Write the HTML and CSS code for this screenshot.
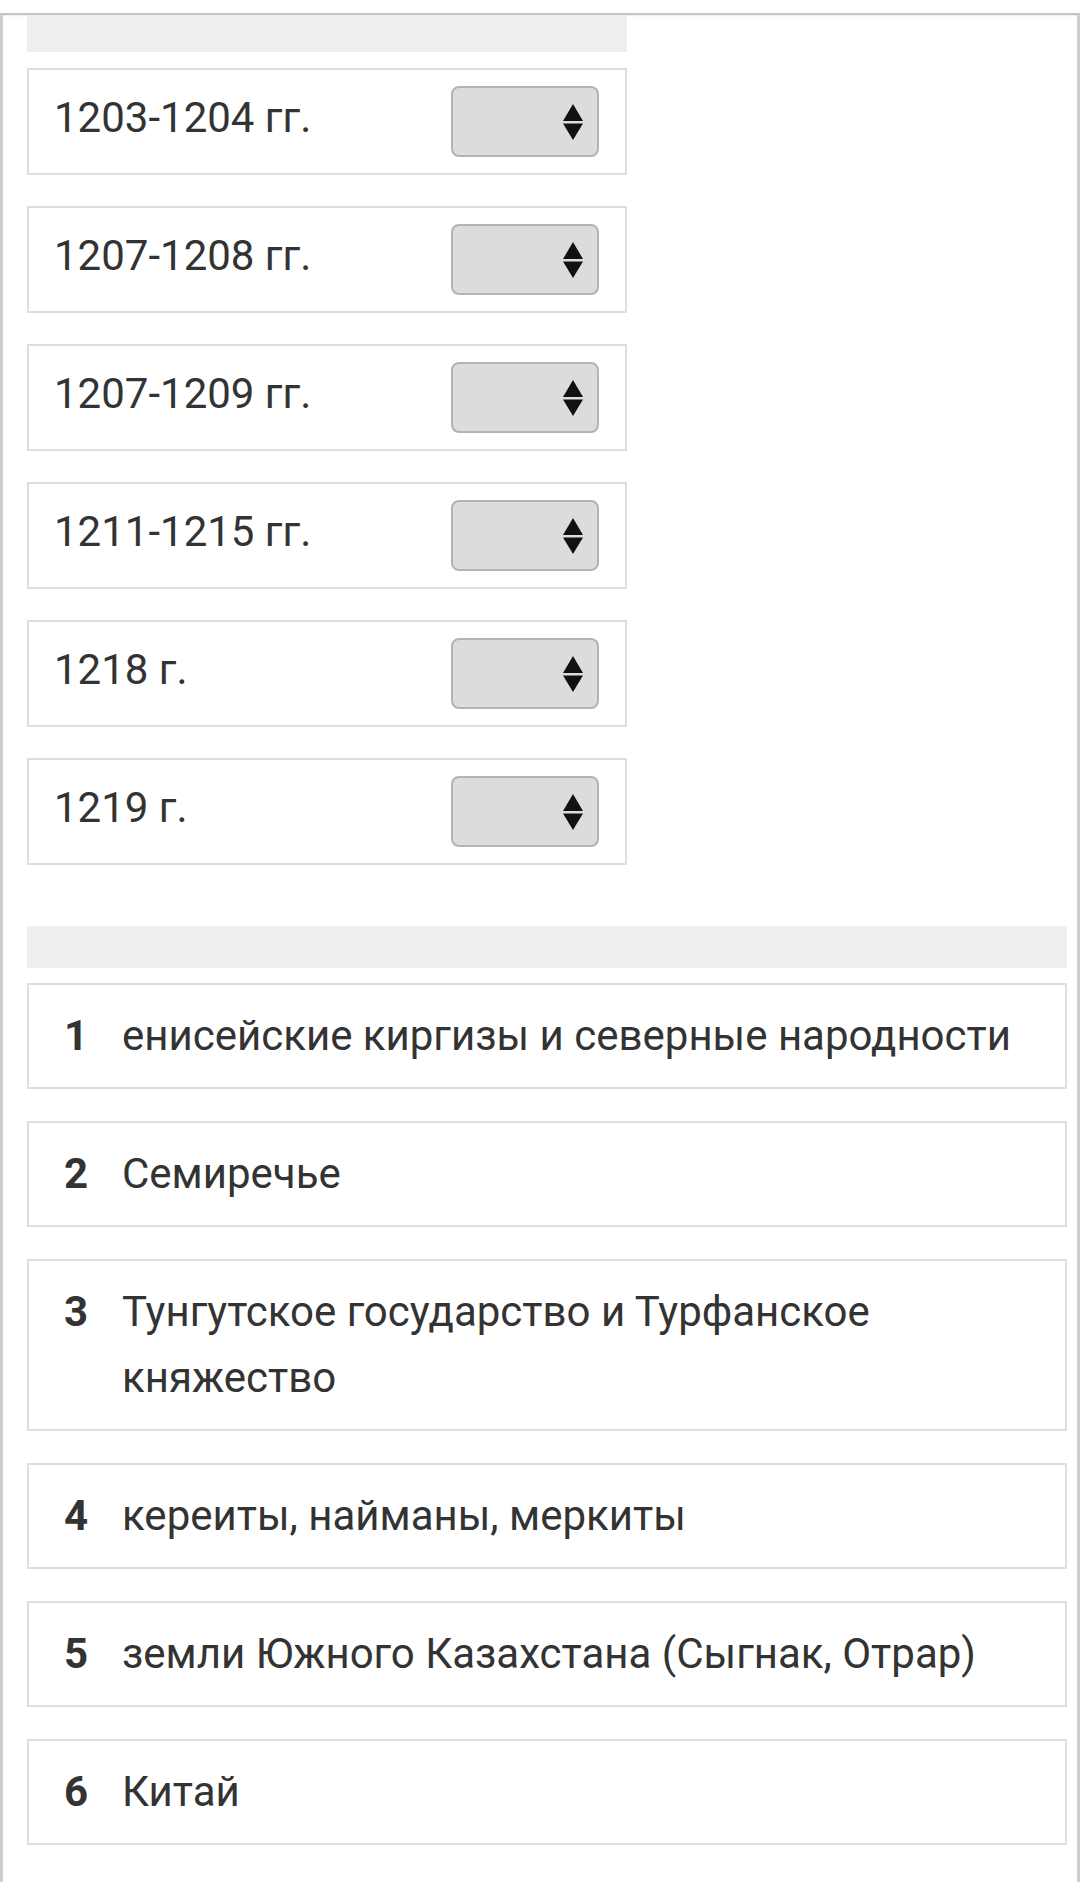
FILE: index.html
```html
<!DOCTYPE html>
<html lang="ru">
<head>
<meta charset="utf-8">
<title>Задание</title>
<link rel="stylesheet" href="styles.css">
</head>
<body>
<div class="frame">
  <section class="dates">
    <div class="bar bar-top"></div>
    <div class="card"><span class="date">1203-1204 гг.</span><div class="select"><svg class="arrows" viewBox="0 0 20 36" width="20" height="36"><polygon points="10,0 20,17 0,17" fill="#111"/><polygon points="0,19.5 20,19.5 10,36" fill="#111"/></svg></div></div>
    <div class="card"><span class="date">1207-1208 гг.</span><div class="select"><svg class="arrows" viewBox="0 0 20 36" width="20" height="36"><polygon points="10,0 20,17 0,17" fill="#111"/><polygon points="0,19.5 20,19.5 10,36" fill="#111"/></svg></div></div>
    <div class="card"><span class="date">1207-1209 гг.</span><div class="select"><svg class="arrows" viewBox="0 0 20 36" width="20" height="36"><polygon points="10,0 20,17 0,17" fill="#111"/><polygon points="0,19.5 20,19.5 10,36" fill="#111"/></svg></div></div>
    <div class="card"><span class="date">1211-1215 гг.</span><div class="select"><svg class="arrows" viewBox="0 0 20 36" width="20" height="36"><polygon points="10,0 20,17 0,17" fill="#111"/><polygon points="0,19.5 20,19.5 10,36" fill="#111"/></svg></div></div>
    <div class="card"><span class="date">1218 г.</span><div class="select"><svg class="arrows" viewBox="0 0 20 36" width="20" height="36"><polygon points="10,0 20,17 0,17" fill="#111"/><polygon points="0,19.5 20,19.5 10,36" fill="#111"/></svg></div></div>
    <div class="card"><span class="date">1219 г.</span><div class="select"><svg class="arrows" viewBox="0 0 20 36" width="20" height="36"><polygon points="10,0 20,17 0,17" fill="#111"/><polygon points="0,19.5 20,19.5 10,36" fill="#111"/></svg></div></div>
  </section>
  <section class="regions">
    <div class="bar bar-wide"></div>
    <div class="item"><span class="num">1</span><span class="txt">енисейские киргизы и северные народности</span></div>
    <div class="item"><span class="num">2</span><span class="txt">Семиречье</span></div>
    <div class="item"><span class="num">3</span><span class="txt">Тунгутское государство и Турфанское княжество</span></div>
    <div class="item"><span class="num">4</span><span class="txt">кереиты, найманы, меркиты</span></div>
    <div class="item"><span class="num">5</span><span class="txt">земли Южного Казахстана (Сыгнак, Отрар)</span></div>
    <div class="item"><span class="num">6</span><span class="txt">Китай</span></div>
  </section>
</div>
</body>
</html>
```
FILE: styles.css
```css
html, body {
  margin: 0;
  padding: 0;
  background: #fff;
}
body {
  font-family: Roboto, "Noto Sans", "Liberation Sans", sans-serif;
  color: #333;
  height: 1882px;
  overflow: hidden;
}
.frame {
  margin-top: 13px;
  border-top: 2px solid #c4c4c4;
  border-left: 3px solid #cdcdcd;
  border-right: 3px solid #cdcdcd;
  box-shadow: inset 0 2px 2px -1px rgba(0,0,0,0.08);
  padding: 0 10px 0 24px;
  min-height: 1900px;
}
.bar {
  background: #eeeeee;
}
.bar-top {
  width: 600px;
  height: 37px;
}
.dates {
  display: flex;
  flex-direction: column;
  gap: 31px;
}
.dates .bar-top {
  margin-bottom: -15px;
}
.card {
  box-sizing: border-box;
  width: 600px;
  height: 107px;
  border: 2px solid #dedede;
  display: flex;
  align-items: center;
  justify-content: space-between;
  padding: 0 26px 0 25px;
}
.date {
  font-size: 42px;
  line-height: 48px;
  margin-top: -7px;
  color: #333;
}
.select {
  box-sizing: border-box;
  width: 148px;
  height: 71px;
  background: #dcdcdc;
  border: 2px solid #b3b3b3;
  border-radius: 8px;
  display: flex;
  align-items: center;
  justify-content: flex-end;
  padding-right: 14px;
}
.arrows {
  display: block;
}
.regions {
  margin-top: 61px;
  display: flex;
  flex-direction: column;
  gap: 32px;
}
.bar-wide {
  height: 42px;
  margin-bottom: -17px;
}
.item {
  box-sizing: border-box;
  border: 2px solid #dedede;
  padding: 18px 20px 18px 35px;
  display: grid;
  grid-template-columns: 58px 1fr;
  font-size: 42px;
  line-height: 66px;
}
.num {
  font-weight: 700;
  color: #333;
}
.txt {
  color: #333;
}
```
